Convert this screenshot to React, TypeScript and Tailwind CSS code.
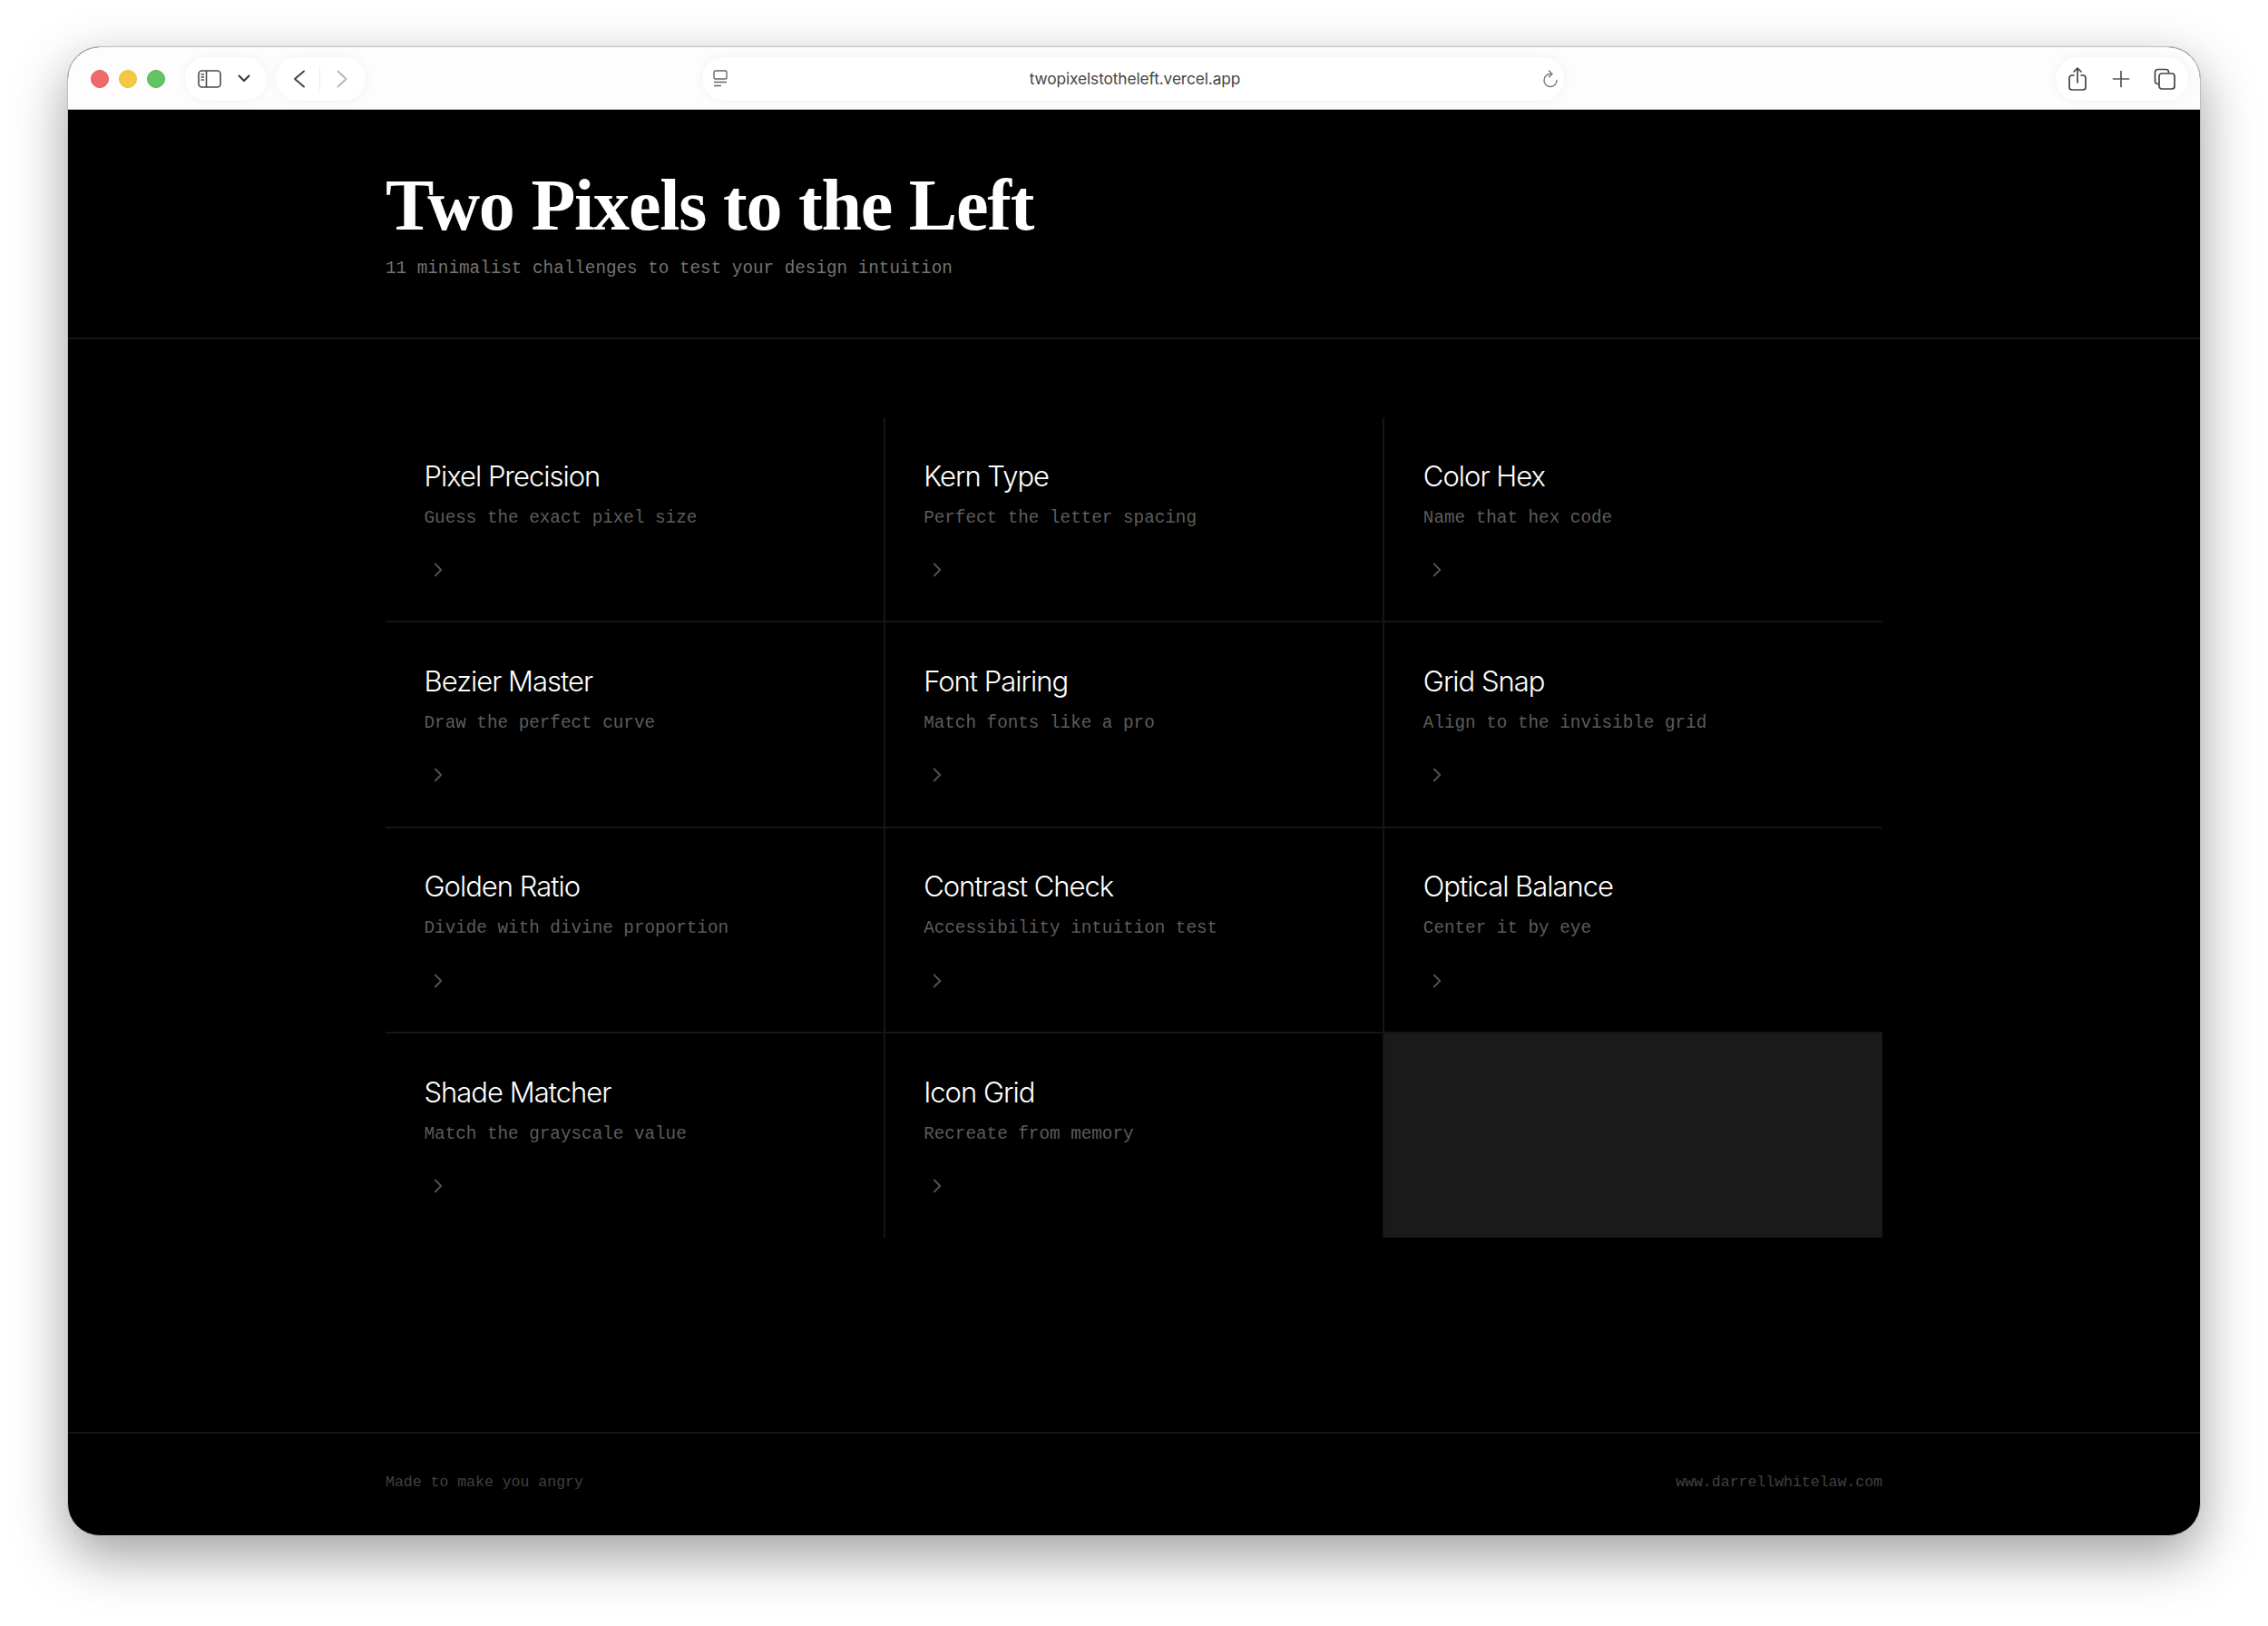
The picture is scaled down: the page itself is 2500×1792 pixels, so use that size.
import { ChevronRight } from 'lucide-react';

const challenges = [
  { title: 'Pixel Precision', description: 'Guess the exact pixel size' },
  { title: 'Kern Type', description: 'Perfect the letter spacing' },
  { title: 'Color Hex', description: 'Name that hex code' },
  { title: 'Bezier Master', description: 'Draw the perfect curve' },
  { title: 'Font Pairing', description: 'Match fonts like a pro' },
  { title: 'Grid Snap', description: 'Align to the invisible grid' },
  { title: 'Golden Ratio', description: 'Divide with divine proportion' },
  { title: 'Contrast Check', description: 'Accessibility intuition test' },
  { title: 'Optical Balance', description: 'Center it by eye' },
  { title: 'Shade Matcher', description: 'Match the grayscale value' },
  { title: 'Icon Grid', description: 'Recreate from memory' },
];

function Toolbar() {
  return (
    <div className="flex h-[69px] items-center border-b border-[#c8c8c8] bg-[#fdfdfd] pl-[25px] pr-[13px] pt-[1px] font-['Inter',sans-serif]">
      <div className="flex items-center gap-[11px]">
        <span className="h-[20px] w-[20px] rounded-full border border-[#e05a5a] bg-[#ee6a6c]" />
        <span className="h-[20px] w-[20px] rounded-full border border-[#e8bb3c] bg-[#f5c842]" />
        <span className="h-[20px] w-[20px] rounded-full border border-[#58b54c] bg-[#62c465]" />
      </div>

      <div className="ml-[22px] flex h-[48px] w-[90px] items-center justify-between rounded-full bg-white pl-[14px] pr-[18px] shadow-[0_0_12px_rgba(0,0,0,0.05)]">
        <svg width="26" height="20" viewBox="0 0 26 20" fill="none" stroke="#4a4a4a" strokeWidth="1.6">
          <rect x="1" y="1" width="24" height="18" rx="3.5" />
          <path d="M9.5 1v18" />
          <path d="M3.5 5h3.5M3.5 8h3.5M3.5 11h3.5" strokeWidth="1.3" />
        </svg>
        <svg width="14" height="9" viewBox="0 0 14 9" fill="none" stroke="#333" strokeWidth="2" strokeLinecap="round" strokeLinejoin="round">
          <path d="M1.5 1.5 7 7l5.5-5.5" />
        </svg>
      </div>

      <div className="ml-[10px] flex h-[48px] w-[99px] items-center rounded-full bg-white pl-[19px] shadow-[0_0_12px_rgba(0,0,0,0.05)]">
        <svg width="14" height="20" viewBox="0 0 14 20" fill="none" stroke="#444" strokeWidth="2" strokeLinecap="round" strokeLinejoin="round">
          <path d="M12 1.5 2 10l10 8.5" />
        </svg>
        <span className="ml-[15px] h-[27px] w-px bg-[#eeeeee]" />
        <svg className="ml-[18px]" width="12" height="20" viewBox="0 0 12 20" fill="none" stroke="#b8b8b8" strokeWidth="2" strokeLinecap="round" strokeLinejoin="round">
          <path d="M1.5 1.5 10.5 10l-9 8.5" />
        </svg>
      </div>

      <div className="ml-[371px] flex h-[48px] w-[950px] items-center justify-between rounded-full bg-white pl-[12px] pr-[6px] shadow-[0_0_12px_rgba(0,0,0,0.05)]">
        <svg width="16" height="19" viewBox="0 0 16 19" fill="none" stroke="#666" strokeWidth="1.4">
          <rect x="1" y="1" width="14" height="9" rx="1.5" />
          <path d="M1 13.5h14M1 17.5h8" />
        </svg>
        <span className="pt-[1px] text-[17.3px] tracking-[-0.1px] text-[#444444]">twopixelstotheleft.vercel.app</span>
        <svg width="18" height="20" viewBox="0 0 18 20" fill="none" stroke="#777" strokeWidth="1.4" strokeLinecap="round" strokeLinejoin="round">
          <path d="M9 4.5a7 7 0 1 0 7 7" />
          <path d="M7.5 1 11 4.5 7.5 8" />
        </svg>
      </div>

      <div className="ml-auto flex h-[48px] w-[146px] items-center rounded-full bg-white pl-[14px] shadow-[0_0_12px_rgba(0,0,0,0.05)]">
        <svg width="20" height="26" viewBox="0 0 20 26" fill="none" stroke="#444" strokeWidth="1.7" strokeLinecap="round" strokeLinejoin="round">
          <path d="M6 9H4a3 3 0 0 0-3 3v10a3 3 0 0 0 3 3h12a3 3 0 0 0 3-3V12a3 3 0 0 0-3-3h-2" />
          <path d="M10 17V1.5M6 5l4-3.8L14 5" />
        </svg>
        <svg className="ml-[28px]" width="20" height="20" viewBox="0 0 20 20" fill="none" stroke="#555" strokeWidth="1.7" strokeLinecap="round">
          <path d="M10 1.5v17M1.5 10h17" />
        </svg>
        <svg className="ml-[26px]" width="24" height="24" viewBox="0 0 24 24" fill="none" stroke="#444" strokeWidth="1.7" strokeLinejoin="round">
          <path d="M5.5 17.5H4.5a3 3 0 0 1-3-3V4.5a3 3 0 0 1 3-3h9a3 3 0 0 1 3 3v1" />
          <rect x="6" y="6" width="17" height="17" rx="3" />
        </svg>
      </div>
    </div>
  );
}

export default function App() {
  return (
    <div className="h-[1792px] overflow-hidden bg-white pl-[74px] pt-[51px]">
      <div className="flex h-[1642px] w-[2352px] flex-col overflow-hidden rounded-[36px] border border-[#bdbdbd] bg-black shadow-[0_22px_60px_rgba(0,0,0,0.38)]">
        <Toolbar />

        <header className="h-[253px] border-b-2 border-[#151515] pl-[350px] pt-[61px]">
          <h1 className="font-['Liberation_Serif',serif] text-[80px] leading-[88px] font-bold tracking-[-1.2px] text-white">
            Two Pixels to the Left
          </h1>
          <p className="mt-[12px] font-['Liberation_Mono',monospace] text-[19.3px] leading-[28px] text-[#737373]">
            11 minimalist challenges to test your design intuition
          </p>
        </header>

        <main className="flex-1 px-[350px] pt-[86px]">
          <div className="grid grid-cols-3 gap-[2px] bg-[#151515]">
            {challenges.map((challenge) => (
              <div key={challenge.title} className="h-[224.4px] bg-black pl-[42.5px] pr-[40px] pt-[42.5px]">
                <h2 className="font-['Inter',sans-serif] text-[31px] leading-[44px] font-light tracking-[-1px] text-white">
                  {challenge.title}
                </h2>
                <p className="mt-[10px] font-['Liberation_Mono',monospace] text-[19.3px] leading-[28px] text-[#5c5c5c]">
                  {challenge.description}
                </p>
                <ChevronRight className="ml-[2px] mt-[30.5px] text-[#525252]" size={26} strokeWidth={1.7} />
              </div>
            ))}
            <div className="bg-[#1a1a1a]" />
          </div>
        </main>

        <footer className="flex h-[114px] items-center justify-between border-t-2 border-[#151515] px-[350px] pb-[3px] font-['Liberation_Mono',monospace] text-[16.5px] text-[#404040]">
          <span>Made to make you angry</span>
          <span>www.darrellwhitelaw.com</span>
        </footer>
      </div>
    </div>
  );
}
